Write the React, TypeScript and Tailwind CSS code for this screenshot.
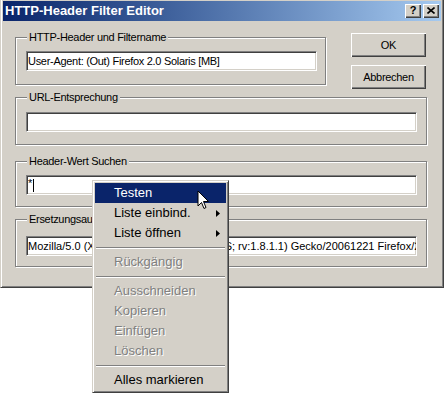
import React from 'react';

const font = { fontFamily: '"Liberation Sans", Arial, sans-serif' };

const raised =
  'bg-[#d4d0c8] shadow-[inset_1px_1px_0_#ffffff,inset_-1px_-1px_0_#404040,inset_-2px_-2px_0_#808080]';
const sunken =
  'bg-white border border-t-[#808080] border-l-[#808080] border-r-white border-b-white shadow-[inset_1px_1px_0_#404040,inset_-1px_-1px_0_#d4d0c8]';
const etched =
  'relative border border-[#808080] shadow-[inset_1px_1px_0_#ffffff,1px_1px_0_#ffffff]';

const Group = ({
  label,
  className,
  inputTop,
  children,
}: {
  label: string;
  className: string;
  inputTop: string;
  children?: React.ReactNode;
}) => (
  <div className={`${etched} ${className} pl-[10px] pr-[8px]`}>
    <span className="absolute left-[11px] -top-[8px] px-[2px] bg-[#d4d0c8] leading-[14px]">{label}</span>
    <div className={`${sunken} ${inputTop} h-[20px] flex items-center pl-[1px] overflow-hidden whitespace-nowrap`}>
      {children}
    </div>
  </div>
);

const Arrow = () => (
  <svg width="4" height="7" viewBox="0 0 4 7" className="absolute right-[6px] top-[7px]">
    <polygon points="0,0 4,3.5 0,7" fill="#000" />
  </svg>
);

const MenuItem = ({
  text,
  active,
  disabled,
  sub,
}: {
  text: string;
  active?: boolean;
  disabled?: boolean;
  sub?: boolean;
}) => (
  <div
    className={`relative h-[20px] pl-[19px] flex items-center ${
      active ? 'bg-[#0a246a] text-white' : disabled ? 'text-[#808080] [text-shadow:1px_1px_0_#ffffff]' : 'text-black'
    }`}
  >
    {text}
    {sub && <Arrow />}
  </div>
);

const Separator = () => (
  <div className="h-[9px] flex flex-col justify-center px-[1px]">
    <div className="h-px bg-[#808080]" />
    <div className="h-px bg-white" />
  </div>
);

export default function App() {
  return (
    <div className="relative w-[444px] h-[393px] bg-white overflow-hidden" style={font}>
      {/* dialog window */}
      <div className="w-[444px] h-[288px] bg-[#d4d0c8] border-l border-r border-b border-l-[#d4d0c8] border-r-[#404040] border-b-[#404040] shadow-[inset_1px_0_0_#ffffff,inset_-1px_-1px_0_#808080] px-[2px] pt-[1px] text-[11px] tracking-[-0.3px] text-black">
        {/* title bar */}
        <div className="h-[20px] flex items-center pl-[2px] pr-[1px] bg-gradient-to-r from-[#0a246a] to-[#a6caf0]">
          <span className="text-white font-bold text-[13px] tracking-normal">HTTP-Header Filter Editor</span>
          <div className="ml-auto mr-[1px] flex gap-[2px]">
            <div className={`${raised} w-[16px] h-[14px] flex items-center justify-center text-[11px] font-bold leading-none pb-[1px]`}>
              ?
            </div>
            <div className={`${raised} w-[16px] h-[14px] flex items-center justify-center pb-[1px]`}>
              <svg width="8" height="7" viewBox="0 0 8 7">
                <path d="M0.5 0.5 L7.5 6.5 M7.5 0.5 L0.5 6.5" stroke="#000" strokeWidth="1.6" />
              </svg>
            </div>
          </div>
        </div>

        {/* content */}
        <div className="pl-[12px] pr-[14px] pt-[12px]">
          <div className="flex items-start">
            <Group label="HTTP-Header und Filtername" className="mt-[4px] w-[311px] h-[48px]" inputTop="mt-[13px]">
              User-Agent: (Out) Firefox 2.0 Solaris [MB]
            </Group>
            <div className="ml-auto mr-[1px] w-[75px] flex flex-col gap-[8px]">
              <div className={`${raised} h-[24px] flex items-center justify-center`}>OK</div>
              <div className={`${raised} h-[24px] flex items-center justify-center`}>Abbrechen</div>
            </div>
          </div>
          <Group label="URL-Entsprechung" className="mt-[8px] h-[48px] pr-[9px]" inputTop="mt-[14px]" />
          <Group label="Header-Wert Suchen" className="mt-[16px] h-[46px] pr-[9px]" inputTop="mt-[13px]">
            <span className="leading-none -mt-[4px]">*</span>
            <span className="ml-[1px] w-px h-[13px] bg-black" />
          </Group>
          <Group label="Ersetzungsausdruck" className="mt-[12px] h-[48px] pr-[9px]" inputTop="mt-[16px]">
            <span className="tracking-normal">
              Mozilla/5.0 (X11; U; SunOS sun4u; en-US; rv:1.8.1.1) Gecko/20061221 Firefox/2.0.0.1
            </span>
          </Group>
        </div>
      </div>

      {/* context menu */}
      <div className="absolute left-[92px] top-[180px] w-[137px] bg-[#d4d0c8] border border-t-[#d4d0c8] border-l-[#d4d0c8] border-r-[#404040] border-b-[#404040] shadow-[inset_1px_1px_0_#ffffff,inset_-1px_-1px_0_#808080] p-[2px] text-[13px]">
        <MenuItem text="Testen" active />
        <MenuItem text="Liste einbind." sub />
        <MenuItem text="Liste öffnen" sub />
        <Separator />
        <MenuItem text="Rückgängig" disabled />
        <Separator />
        <MenuItem text="Ausschneiden" disabled />
        <MenuItem text="Kopieren" disabled />
        <MenuItem text="Einfügen" disabled />
        <MenuItem text="Löschen" disabled />
        <Separator />
        <MenuItem text="Alles markieren" />
      </div>

      {/* mouse pointer */}
      <svg width="13" height="21" viewBox="0 0 13 21" className="absolute left-[197px] top-[190px]">
        <path d="M1 1 L1 16 L4.5 12.5 L7 18.5 L9 17.5 L6.5 11.5 L11.5 11.5 Z" fill="#fff" stroke="#000" strokeWidth="1" strokeLinejoin="miter" />
      </svg>
    </div>
  );
}
